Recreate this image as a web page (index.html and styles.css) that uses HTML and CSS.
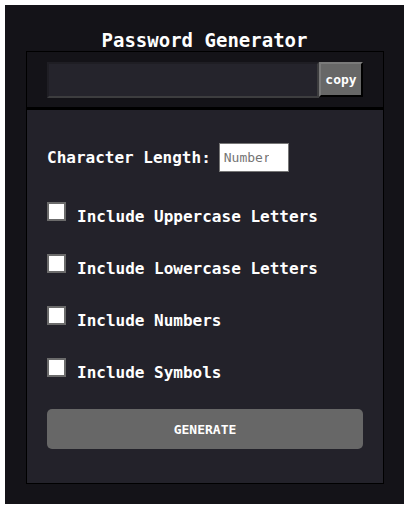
FILE: index.html
```html
<!DOCTYPE html>
<html lang="en">
<head>
<meta charset="utf-8">
<title>Password Generator</title>
<link rel="stylesheet" href="styles.css">
</head>
<body>
<div class="app">
  <h1 class="title">Password Generator</h1>
  <div class="card">
    <div class="output-bar">
      <input class="output" type="text" readonly>
      <button class="copy" type="button">copy</button>
    </div>
    <div class="options">
      <label class="row length-row">
        <span>Character Length:</span>
        <input class="length" type="number" placeholder="Number">
      </label>
      <label class="row"><input class="check" type="checkbox"><span class="label">Include Uppercase Letters</span></label>
      <label class="row"><input class="check" type="checkbox"><span class="label">Include Lowercase Letters</span></label>
      <label class="row"><input class="check" type="checkbox"><span class="label">Include Numbers</span></label>
      <label class="row"><input class="check" type="checkbox"><span class="label">Include Symbols</span></label>
      <button class="generate" type="button">GENERATE</button>
    </div>
  </div>
</div>
</body>
</html>
```
FILE: styles.css
```css
html, body {
  margin: 0;
  padding: 0;
  background: #ffffff;
}
body {
  padding: 5px;
  font-family: "DejaVu Sans Mono", "Liberation Mono", monospace;
  color: #ffffff;
}
.app {
  width: 399px;
  height: 499px;
  background: #141318;
  box-sizing: border-box;
  padding-top: 1px;
}
.title {
  margin: 0;
  height: 45px;
  display: flex;
  align-items: center;
  justify-content: center;
  font-size: 19px;
  font-weight: bold;
  padding-top: 22px;
  box-sizing: border-box;
}
.card {
  width: 358px;
  margin: 0 0 0 21px;
  border: 1px solid #000;
  box-sizing: border-box;
}
.output-bar {
  display: flex;
  align-items: flex-start;
  padding: 10px 20px 9px 20px;
  background: #141318;
  border-bottom: 3px solid #000;
}
.output {
  flex: 1;
  height: 36px;
  box-sizing: border-box;
  margin: 0;
  background: #25242c;
  border-style: solid;
  border-width: 2px;
  border-color: #1f1e24 #3d3d3f #3d3d3f #1f1e24;
  outline: none;
  color: #fff;
}
.copy {
  width: 44px;
  height: 35px;
  box-sizing: border-box;
  margin: 0;
  padding: 0;
  background: #676767;
  color: #fff;
  font-family: inherit;
  font-weight: bold;
  font-size: 13px;
  border-style: solid;
  border-width: 2px;
  border-color: #7a7a7a #000 #000 #7a7a7a;
}
.options {
  background: #23222a;
  padding: 32px 20px 34px 20px;
  display: flex;
  flex-direction: column;
  gap: 22px;
}
.row {
  display: flex;
  align-items: center;
  height: 30px;
  font-size: 16px;
  font-weight: bold;
}
.length-row {
  margin-bottom: 2px;
}
.label {
  padding-top: 10px;
}
.length {
  margin: 0 0 0 8px;
  width: 70px;
  height: 29px;
  box-sizing: border-box;
  border: 1px solid #767676;
  background: #fff;
  padding: 0 4px;
  font-family: inherit;
  font-size: 13px;
}
.length::placeholder {
  color: #757575;
}
.check {
  appearance: none;
  -webkit-appearance: none;
  margin: 0 11px 0 0;
  width: 19px;
  height: 19px;
  box-sizing: border-box;
  border: 2px solid #6b6b6b;
  background: #fff;
  flex: none;
}
.generate {
  margin-top: 5px;
  height: 40px;
  border: none;
  border-radius: 5px;
  background: #676767;
  color: #fff;
  font-family: inherit;
  font-size: 13px;
  font-weight: bold;
}
```
